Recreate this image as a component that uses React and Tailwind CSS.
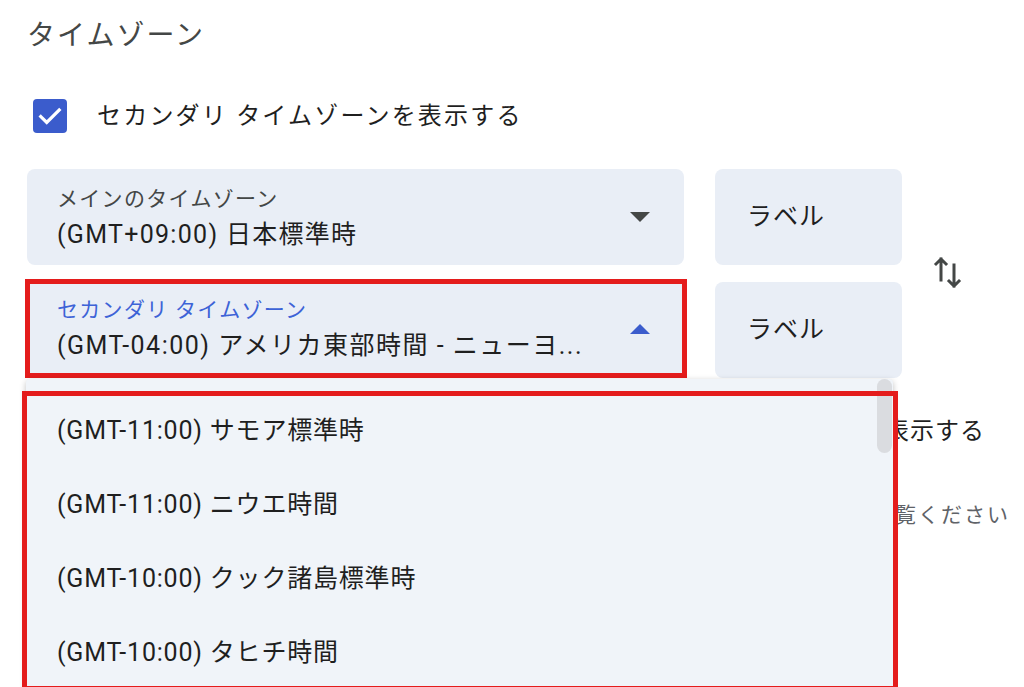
import React from 'react'

const font = { fontFamily: 'Roboto, "Noto Sans CJK JP", sans-serif' }

const zones = [
  '(GMT-11:00) サモア標準時',
  '(GMT-11:00) ニウエ時間',
  '(GMT-10:00) クック諸島標準時',
  '(GMT-10:00) タヒチ時間',
]

const Caret = ({ up, color }) => (
  <svg width="20" height="10" viewBox="0 0 20 10" className="shrink-0">
    <path d={up ? 'M0 10 L10 0 L20 10 Z' : 'M0 0 L20 0 L10 10 Z'} fill={color} />
  </svg>
)

const App = () => {
  return (
    <div className="relative w-[1024px] h-[687px] overflow-hidden bg-white text-[#3c4043]" style={font}>
      <div className="pl-[27px] pt-[18px]">
        <h2 className="text-[28px] leading-[36px] tracking-[2px] text-[#444746]">タイムゾーン</h2>

        <div className="mt-[45px] flex items-center">
          <div className="ml-[6px] w-[34px] h-[34px] rounded-[4px] bg-[#3b5ccc] flex items-center justify-center">
            <svg width="26" height="26" viewBox="0 0 24 24" fill="none" stroke="white" strokeWidth="3" strokeLinecap="square" strokeLinejoin="miter">
              <path d="M3.5 12.5l5.5 5.5L20.5 6.5" />
            </svg>
          </div>
          <span className="ml-[30px] text-[24px] leading-[34px] tracking-[2.2px] text-[#1f1f1f]">セカンダリ タイムゾーンを表示する</span>
        </div>

        <div className="mt-[36px] flex items-center">
          <div className="flex flex-col">
            <div className="flex">
              <div className="w-[657px] h-[96px] rounded-[8px] bg-[#e9eef6] flex items-center pl-[30px] pr-[34px]">
                <div className="flex-1 flex flex-col pt-[1px]">
                  <span className="text-[21px] leading-[28px] tracking-[1.3px] text-[#444746]">メインのタイムゾーン</span>
                  <span className="mt-[6px] text-[25px] leading-[32px] tracking-[1.3px] text-[#1f1f1f]">(GMT+09:00) 日本標準時</span>
                </div>
                <Caret color="#444746" />
              </div>
              <div className="ml-[31px] w-[187px] h-[96px] rounded-[8px] bg-[#e9eef6] flex items-center pl-[32px] text-[25px] tracking-[1px] text-[#1f1f1f]">
                ラベル
              </div>
            </div>
            <div className="mt-[14px] flex items-end">
              <div className="-ml-[2px] w-[662px] h-[99px] border-[5px] border-[#e41c1c] bg-[#e9eef6] flex items-center pl-[27px] pr-[32px]">
                <div className="flex-1 flex flex-col">
                  <span className="text-[21px] leading-[28px] tracking-[1.3px] text-[#3d63d7]">セカンダリ タイムゾーン</span>
                  <span className="mt-[6px] text-[25px] leading-[32px] tracking-[1.5px] text-[#1f1f1f] whitespace-nowrap">(GMT-04:00) アメリカ東部時間 - ニューヨ...</span>
                </div>
                <Caret up color="#3b5ccc" />
              </div>
              <div className="ml-[28px] w-[187px] h-[96px] rounded-[8px] bg-[#e9eef6] flex items-center pl-[32px] text-[25px] tracking-[1px] text-[#1f1f1f]">
                ラベル
              </div>
            </div>
          </div>
          <svg className="ml-[31px] mt-[-4px]" width="30" height="32" viewBox="0 0 30 32" fill="none" stroke="#444746" strokeWidth="3" strokeLinecap="square">
            <path d="M8 24V3M3 8l5-5 5 5" />
            <path d="M21 9v21M16 25l5 5 5-5" />
          </svg>
        </div>

        <div className="mt-[36px] w-[958px] flex justify-end">
          <span className="text-[24px] leading-[34px] tracking-[1px] text-[#1f1f1f] whitespace-nowrap">世界時計を表示する</span>
        </div>
        <div className="mt-[53px] w-[983px] flex justify-end">
          <span className="text-[21px] leading-[28px] tracking-[2px] text-[#5f6368] whitespace-nowrap">詳しくはヘルプをご覧ください</span>
        </div>
      </div>

      <div className="absolute left-[26px] top-[379px] w-[867px] h-[340px] bg-[#f0f4f9] shadow-[0_2px_6px_rgba(0,0,0,0.25)] rounded-t-[4px] pt-[15px]">
        {zones.map(z => (
          <div key={z} className="h-[74px] flex items-center pl-[31px] text-[25px] tracking-[0.8px] text-[#1f1f1f] whitespace-nowrap">
            {z}
          </div>
        ))}
        <div className="absolute right-[1px] top-0 w-[15px] h-[74px] rounded-full bg-[#dadce0]" />
      </div>

      <div className="absolute left-[22px] top-[391px] w-[876px] h-[300px] border-[5px] border-[#e41c1c]" />
    </div>
  )
}

export default App
